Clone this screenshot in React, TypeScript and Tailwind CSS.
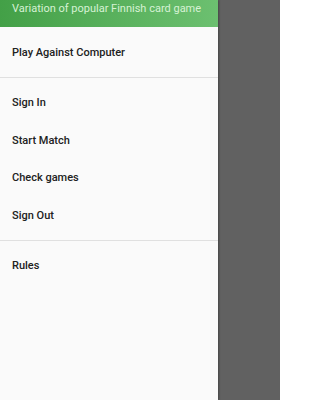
const groups = [
  ["Play Against Computer"],
  ["Sign In", "Start Match", "Check games", "Sign Out"],
  ["Rules"],
];

const App = () => {
  return (
    <div className="flex h-[400px] w-[280px] bg-[#616161]" style={{ fontFamily: "Roboto, sans-serif" }}>
      <div className="flex h-full w-[218px] flex-col bg-[#fafafa] shadow-[1px_0_2px_rgba(0,0,0,0.3)]">
        <div className="h-[27px] whitespace-nowrap bg-gradient-to-r from-[#43a047] to-[#6cc070] px-3 pt-[2px] text-[11px] leading-[13px] text-[#d6f2d4]">
          Variation of popular Finnish card game
        </div>
        {groups.map((items, i) => (
          <div key={i} className={i > 0 ? "border-t border-[#e0e0e0] py-[6px]" : "py-[6px]"}>
            {items.map((item) => (
              <div key={item} className="flex h-[37.5px] items-center px-3 pt-[2px] text-[11px] font-medium text-[#212121]">
                {item}
              </div>
            ))}
          </div>
        ))}
      </div>
    </div>
  );
};

export default App;
